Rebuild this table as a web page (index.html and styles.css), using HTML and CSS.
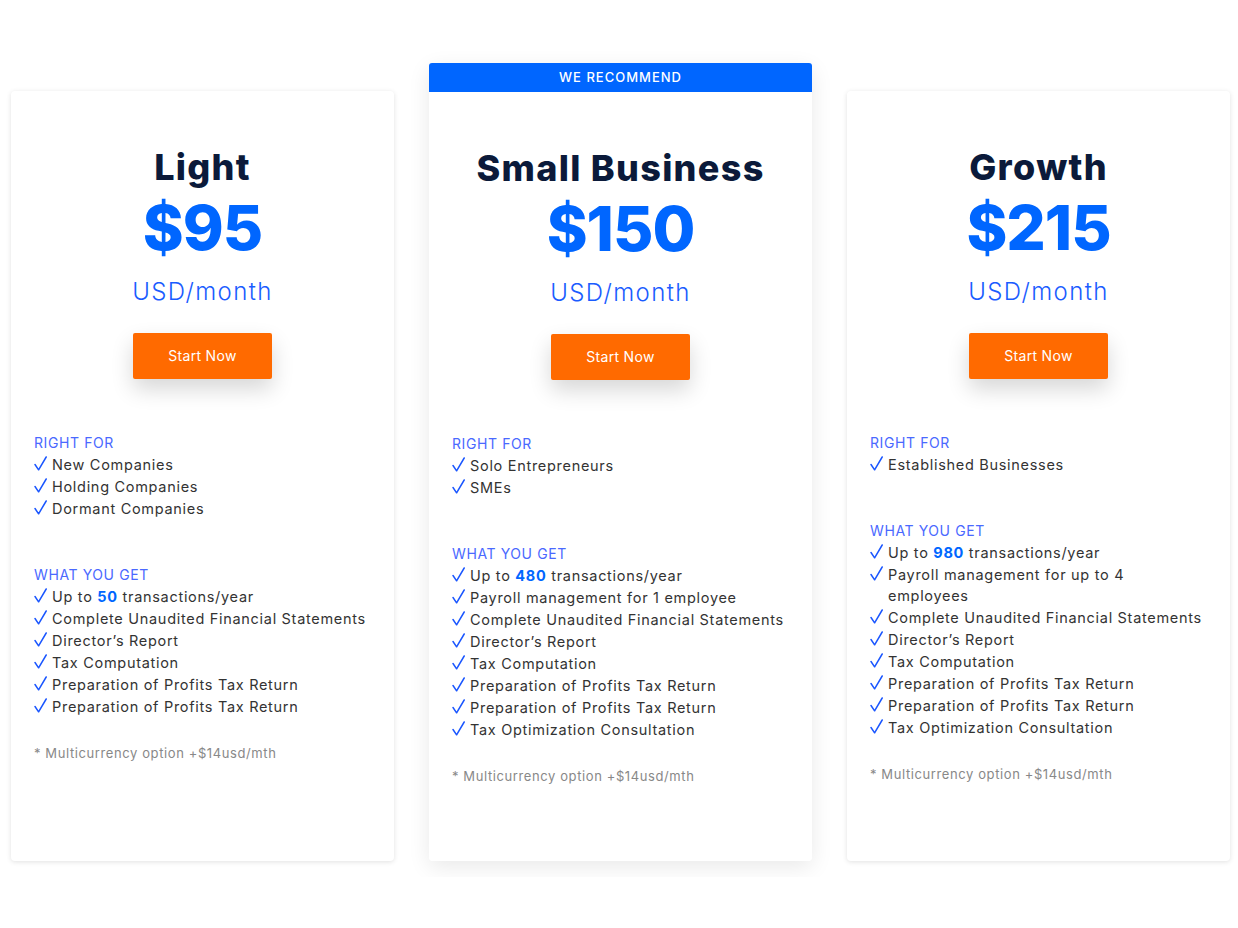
FILE: index.html
```html
<!DOCTYPE html>
<html lang="en">
<head>
  <meta charset="UTF-8">
  <title>Pricing</title>
  <meta name="viewport" content="width=device-width, initial-scale=1">
  <link rel="stylesheet" href="styles.css">
</head>
<body>
  <div class="plans">

    <div class="plan">
      <div class="card">
        <h2 class="plan-name">Light</h2>
        <div class="price">$95</div>
        <div class="period">USD/month</div>
        <a class="start-btn" href="#">Start Now</a>

        <div class="group-title">RIGHT FOR</div>
        <ul class="checks">
          <li>New Companies</li>
          <li>Holding Companies</li>
          <li>Dormant Companies</li>
        </ul>

        <div class="group-title gap">WHAT YOU GET</div>
        <ul class="checks">
          <li>Up to <b>50</b> transactions/year</li>
          <li>Complete Unaudited Financial Statements</li>
          <li>Director’s Report</li>
          <li>Tax Computation</li>
          <li>Preparation of Profits Tax Return</li>
          <li>Preparation of Profits Tax Return</li>
        </ul>

        <p class="note">* Multicurrency option +$14usd/mth</p>
      </div>
    </div>

    <div class="plan featured">
      <div class="ribbon">WE RECOMMEND</div>
      <div class="card">
        <h2 class="plan-name">Small Business</h2>
        <div class="price">$150</div>
        <div class="period">USD/month</div>
        <a class="start-btn" href="#">Start Now</a>

        <div class="group-title">RIGHT FOR</div>
        <ul class="checks">
          <li>Solo Entrepreneurs</li>
          <li>SMEs</li>
        </ul>

        <div class="group-title gap">WHAT YOU GET</div>
        <ul class="checks">
          <li>Up to <b>480</b> transactions/year</li>
          <li>Payroll management for 1 employee</li>
          <li>Complete Unaudited Financial Statements</li>
          <li>Director’s Report</li>
          <li>Tax Computation</li>
          <li>Preparation of Profits Tax Return</li>
          <li>Preparation of Profits Tax Return</li>
          <li>Tax Optimization Consultation</li>
        </ul>

        <p class="note">* Multicurrency option +$14usd/mth</p>
      </div>
    </div>

    <div class="plan">
      <div class="card">
        <h2 class="plan-name">Growth</h2>
        <div class="price">$215</div>
        <div class="period">USD/month</div>
        <a class="start-btn" href="#">Start Now</a>

        <div class="group-title">RIGHT FOR</div>
        <ul class="checks">
          <li>Established Businesses</li>
        </ul>

        <div class="group-title gap">WHAT YOU GET</div>
        <ul class="checks">
          <li>Up to <b>980</b> transactions/year</li>
          <li>Payroll management for up to 4 employees</li>
          <li>Complete Unaudited Financial Statements</li>
          <li>Director’s Report</li>
          <li>Tax Computation</li>
          <li>Preparation of Profits Tax Return</li>
          <li>Preparation of Profits Tax Return</li>
          <li>Tax Optimization Consultation</li>
        </ul>

        <p class="note">* Multicurrency option +$14usd/mth</p>
      </div>
    </div>

  </div>
</body>
</html>
```

FILE: styles.css
```css
body {
  margin: 0;
  background: #fff;
  font-family: Inter, 'Noto Sans', sans-serif;
  color: #333;
}
.plans {
  display: flex;
  align-items: flex-end;
  gap: 35px;
  padding: 63px 9px 16px 11px;
  overflow: hidden;
}
.plan {
  width: 383px;
  flex: none;
}
.card {
  height: 770px;
  box-sizing: border-box;
  background: #fff;
  border-radius: 4px;
  box-shadow: 0 1px 5px rgba(0,0,0,0.12);
  padding: 54px 23px 0;
}
.featured {
  border-radius: 4px;
  box-shadow: 0 6px 22px rgba(0,0,0,0.09);
}
.featured .card {
  border-radius: 0 0 4px 4px;
  height: 769px;
  box-shadow: none;
}
.ribbon {
  height: 29px;
  line-height: 29px;
  background: #0066ff;
  color: #fff;
  text-align: center;
  font-size: 13px;
  font-weight: 500;
  letter-spacing: 1px;
  border-radius: 3px 3px 0 0;
}
.plan-name {
  margin: 0;
  text-align: center;
  font-size: 36px;
  line-height: 44px;
  font-weight: 800;
  color: #0b1a3a;
  letter-spacing: 1.3px;
}
.price {
  margin-top: 7px;
  text-align: center;
  font-size: 62px;
  line-height: 64px;
  font-weight: 800;
  color: #0066ff;
  letter-spacing: -1px;
}
.period {
  margin-top: 17px;
  text-align: center;
  font-size: 24px;
  line-height: 30px;
  font-weight: 300;
  color: #1a5cff;
  letter-spacing: 1.4px;
}
.start-btn {
  display: block;
  width: 139px;
  height: 46px;
  line-height: 46px;
  margin: 26px auto 0;
  background: #ff6a00;
  color: #fff;
  text-align: center;
  text-decoration: none;
  font-size: 14px;
  font-weight: 400;
  letter-spacing: 0.3px;
  border-radius: 2px;
  box-shadow: 0 10px 22px rgba(0,0,0,0.16);
}
.group-title {
  margin-top: 53px;
  font-size: 14px;
  line-height: 22px;
  color: #4a69ff;
  letter-spacing: 0.6px;
}
.group-title.gap {
  margin-top: 45px;
}
.checks {
  list-style: none;
  margin: 0;
  padding: 0;
}
.checks li {
  position: relative;
  padding-left: 18px;
  padding-right: 2px;
  font-size: 14.5px;
  line-height: 21px;
  margin-bottom: 1px;
  letter-spacing: 0.7px;
}
.checks li::before {
  content: "";
  position: absolute;
  left: 0;
  top: 2px;
  width: 13px;
  height: 15px;
  background: url("data:image/svg+xml;utf8,<svg xmlns='http://www.w3.org/2000/svg' viewBox='0 0 13 15'><path d='M1 8.5 L4.6 13.8 L12.2 1' fill='none' stroke='%231a56ff' stroke-width='1.5' stroke-linecap='round' stroke-linejoin='round'/></svg>") no-repeat;
}
.checks b {
  color: #0066ff;
  font-weight: 700;
}
.note {
  margin: 26px 0 0;
  font-size: 13px;
  line-height: 20px;
  color: #888;
  letter-spacing: 0.6px;
}
```
